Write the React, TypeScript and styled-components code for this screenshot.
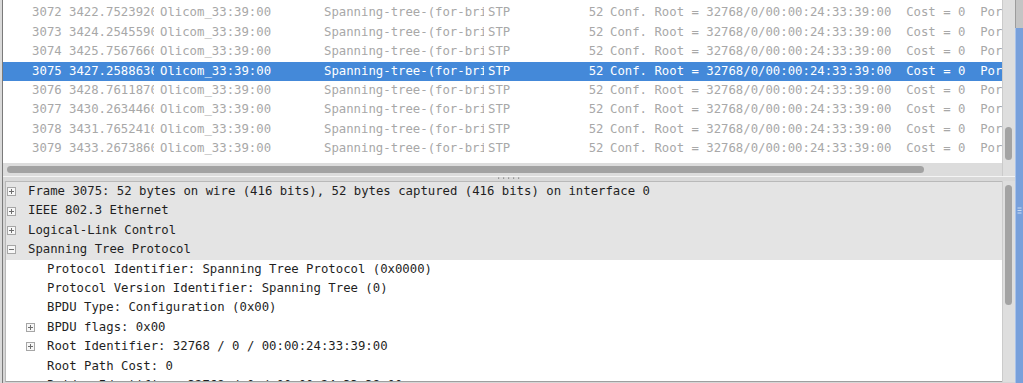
import React from "react";
import styled, { createGlobalStyle } from "styled-components";

const ROW_H = 19.4;

const GlobalStyle = createGlobalStyle`
  *, *::before, *::after {
    box-sizing: border-box;
  }
  html, body {
    margin: 0;
    padding: 0;
    width: 1023px;
    height: 383px;
    overflow: hidden;
    background: #d6d6d6;
  }
  #root {
    height: 100%;
  }
`;

const Window = styled.div`
  display: flex;
  width: 1023px;
  height: 383px;
  font-family: "DejaVu Sans Mono", "Liberation Mono", monospace;
  font-size: 12.3px;
`;

const LeftEdge = styled.div`
  width: 3px;
  background: #dadada;
  border-right: 1px solid #7a7a7a;
`;

const Main = styled.div`
  flex: 1;
  min-width: 0;
  display: flex;
  flex-direction: column;
`;

const RightEdge = styled.div`
  width: 8px;
  display: flex;
  flex-direction: column;
`;

const EdgeCap = styled.div`
  height: 28px;
  background: #c4c4c4;
  border-left: 1px solid #9c9c9c;
`;

const EdgeBody = styled.div`
  flex: 1;
  background: #78a0db;
  border-left: 1px solid #a9c3ea;
  padding-top: 176px;
  padding-left: 1px;
`;

/* ---------- top pane: packet list ---------- */

const TopPane = styled.div`
  height: 176px;
  display: flex;
`;

const ListColumn = styled.div`
  flex: 1;
  min-width: 0;
  display: flex;
  flex-direction: column;
`;

const Viewport = styled.div`
  height: 163px;
  overflow: hidden;
  background: #ffffff;
`;

// list is scrolled: the row above 3072 is mostly out of view
const ListBody = styled.div`
  margin-top: -16px;
`;

const ListRow = styled.div<{ $selected?: boolean }>`
  display: flex;
  height: ${ROW_H}px;
  line-height: ${ROW_H}px;
  color: ${(p) => (p.$selected ? "#ffffff" : "#a8a8a8")};
  background: ${(p) => (p.$selected ? "#4489d9" : "transparent")};
`;

const Cell = styled.div<{ $w?: number; $right?: boolean; $pad: number }>`
  flex: ${(p) => (p.$w ? `0 0 ${p.$w}px` : "1 1 auto")};
  min-width: 0;
  overflow: hidden;
  white-space: pre;
  text-align: ${(p) => (p.$right ? "right" : "left")};
  ${(p) => (p.$right ? `padding-right: ${p.$pad}px;` : `padding-left: ${p.$pad}px;`)}
`;

const HScroll = styled.div`
  height: 13px;
  background: #dcdcdc;
  display: flex;
  align-items: center;
  padding-left: 4px;
`;

const HThumb = styled.div`
  width: 917px;
  height: 7px;
  border-radius: 4px;
  background: #a2a2a2;
`;

const VScroll = styled.div<{ $thumbTop: number; $thumbHeight: number }>`
  width: 13px;
  background: #dedede;
  border-left: 1px solid #cbcbcb;

  &::before {
    content: "";
    display: block;
    margin-top: ${(p) => p.$thumbTop}px;
    margin-left: 2px;
    width: 7px;
    height: ${(p) => p.$thumbHeight}px;
    border-radius: 4px;
    background: #a3a3a3;
  }
`;

/* ---------- splitter ---------- */

const Splitter = styled.div`
  height: 5px;
  border-top: 1px solid #f4f4f4;
  background: #d9d9d9;
  display: flex;
  justify-content: center;
  align-items: flex-start;
`;

/* ---------- bottom pane: packet details ---------- */

const BottomPane = styled.div`
  flex: 1;
  min-height: 0;
  display: flex;
  padding-left: 2px;
  padding-bottom: 1px;
`;

const TreeFrame = styled.div`
  flex: 1;
  min-width: 0;
  overflow: hidden;
  background: #ffffff;
  border-top: 1px solid #b9b9b9;
  border-left: 1px solid #b9b9b9;
  border-bottom: 1px solid #9f9f9f;
`;

const TreeRow = styled.div<{ $depth: number; $header?: boolean }>`
  display: flex;
  align-items: center;
  height: ${ROW_H}px;
  line-height: ${ROW_H}px;
  white-space: pre;
  color: #1f1f1f;
  padding-left: ${(p) => 1 + p.$depth * 19}px;
  background: ${(p) => (p.$header ? "#e4e4e4" : "#ffffff")};
`;

const ExpanderSlot = styled.span`
  flex: 0 0 21px;
  display: flex;
  align-items: center;
`;

const Expander = ({ open }: { open?: boolean }) => (
  <svg width="9" height="9" viewBox="0 0 9 9">
    <rect x="0.5" y="0.5" width="8" height="8" fill="#f7f7f7" stroke="#a6a6a6" />
    <line x1="2" y1="4.5" x2="7" y2="4.5" stroke="#6f6f6f" />
    {!open && <line x1="4.5" y1="2" x2="4.5" y2="7" stroke="#6f6f6f" />}
  </svg>
);

const SplitterDots = () => (
  <svg width="24" height="3" viewBox="0 0 24 3">
    {[1.5, 6.5, 11.5, 16.5, 21.5].map((x) => (
      <rect key={x} x={x - 0.5} y="0.5" width="1.2" height="1.2" fill="#7d7d7d" />
    ))}
  </svg>
);

const Grip = () => (
  <svg width="5" height="8" viewBox="0 0 5 8">
    {[1, 3.5, 6].map((y) => (
      <line key={y} x1="0.5" y1={y} x2="4.5" y2={y} stroke="#c9dbf3" />
    ))}
  </svg>
);

const times: [string, string][] = [
  ["3071", "3421.250121000"],
  ["3072", "3422.752392000"],
  ["3073", "3424.254559000"],
  ["3074", "3425.756766000"],
  ["3075", "3427.258863000"],
  ["3076", "3428.761187000"],
  ["3077", "3430.263446000"],
  ["3078", "3431.765241000"],
  ["3079", "3433.267386000"],
  ["3080", "3434.769523000"],
];

const INFO = "Conf. Root = 32768/0/00:00:24:33:39:00  Cost = 0  Port = 0x8001";

type Detail = { text: string; depth: number; expander?: "open" | "closed"; header?: boolean };

const details: Detail[] = [
  { text: "Frame 3075: 52 bytes on wire (416 bits), 52 bytes captured (416 bits) on interface 0", depth: 0, expander: "closed", header: true },
  { text: "IEEE 802.3 Ethernet", depth: 0, expander: "closed", header: true },
  { text: "Logical-Link Control", depth: 0, expander: "closed", header: true },
  { text: "Spanning Tree Protocol", depth: 0, expander: "open", header: true },
  { text: "Protocol Identifier: Spanning Tree Protocol (0x0000)", depth: 1 },
  { text: "Protocol Version Identifier: Spanning Tree (0)", depth: 1 },
  { text: "BPDU Type: Configuration (0x00)", depth: 1 },
  { text: "BPDU flags: 0x00", depth: 1, expander: "closed" },
  { text: "Root Identifier: 32768 / 0 / 00:00:24:33:39:00", depth: 1, expander: "closed" },
  { text: "Root Path Cost: 0", depth: 1 },
  { text: "Bridge Identifier: 32768 / 0 / 00:00:24:33:39:00", depth: 1, expander: "closed" },
];

export default function App() {
  return (
    <>
      <GlobalStyle />
      <Window>
        <LeftEdge />
        <Main>
          <TopPane>
            <ListColumn>
              <Viewport>
                <ListBody>
                  {times.map(([no, time]) => (
                    <ListRow key={no} $selected={no === "3075"}>
                      <Cell $w={62} $right $pad={3.3}>{no}</Cell>
                      <Cell $w={89} $pad={4}>{time}</Cell>
                      <Cell $w={166} $pad={6}>Olicom_33:39:00</Cell>
                      <Cell $w={164} $pad={4}>Spanning-tree-(for-bridges)_00</Cell>
                      <Cell $w={76} $pad={4}>STP</Cell>
                      <Cell $w={47} $right $pad={3.5}>52</Cell>
                      <Cell $pad={3}>{INFO}</Cell>
                    </ListRow>
                  ))}
                </ListBody>
              </Viewport>
              <HScroll>
                <HThumb />
              </HScroll>
            </ListColumn>
            <VScroll $thumbTop={127} $thumbHeight={33} />
          </TopPane>

          <Splitter>
            <SplitterDots />
          </Splitter>

          <BottomPane>
            <TreeFrame>
              {details.map((d) => (
                <TreeRow key={d.text} $depth={d.depth} $header={d.header}>
                  <ExpanderSlot>{d.expander && <Expander open={d.expander === "open"} />}</ExpanderSlot>
                  <span>{d.text}</span>
                </TreeRow>
              ))}
            </TreeFrame>
            <VScroll $thumbTop={4} $thumbHeight={120} />
          </BottomPane>
        </Main>
        <RightEdge>
          <EdgeCap />
          <EdgeBody>
            <Grip />
          </EdgeBody>
        </RightEdge>
      </Window>
    </>
  );
}
